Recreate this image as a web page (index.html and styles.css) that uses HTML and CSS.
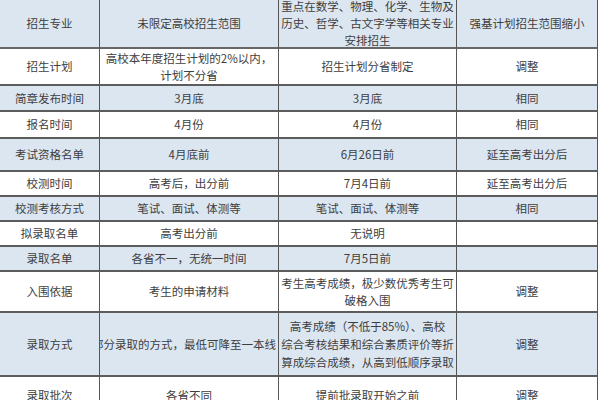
FILE: index.html
```html
<!DOCTYPE html>
<html lang="zh">
<head>
<meta charset="utf-8">
<link rel="stylesheet" href="styles.css">
</head>
<body>
<div class="sheet">
  <div class="row blue h-head">
    <div class="cell">招生专业</div>
    <div class="cell">未限定高校招生范围</div>
    <div class="cell">重点在数学、物理、化学、生物及<br>历史、哲学、古文字学等相关专业<br>安排招生</div>
    <div class="cell">强基计划招生范围缩小</div>
  </div>
  <div class="row h-37">
    <div class="cell">招生计划</div>
    <div class="cell">高校本年度招生计划的2%以内，<br>计划不分省</div>
    <div class="cell">招生计划分省制定</div>
    <div class="cell">调整</div>
  </div>
  <div class="row blue h-26">
    <div class="cell">简章发布时间</div>
    <div class="cell">3月底</div>
    <div class="cell">3月底</div>
    <div class="cell">相同</div>
  </div>
  <div class="row h-27">
    <div class="cell">报名时间</div>
    <div class="cell">4月份</div>
    <div class="cell">4月份</div>
    <div class="cell">相同</div>
  </div>
  <div class="row blue h-33">
    <div class="cell">考试资格名单</div>
    <div class="cell">4月底前</div>
    <div class="cell">6月26日前</div>
    <div class="cell">延至高考出分后</div>
  </div>
  <div class="row h-25">
    <div class="cell">校测时间</div>
    <div class="cell">高考后，出分前</div>
    <div class="cell">7月4日前</div>
    <div class="cell">延至高考出分后</div>
  </div>
  <div class="row blue h-25">
    <div class="cell">校测考核方式</div>
    <div class="cell">笔试、面试、体测等</div>
    <div class="cell">笔试、面试、体测等</div>
    <div class="cell">相同</div>
  </div>
  <div class="row h-25">
    <div class="cell">拟录取名单</div>
    <div class="cell">高考出分前</div>
    <div class="cell">无说明</div>
    <div class="cell"></div>
  </div>
  <div class="row blue h-25">
    <div class="cell">录取名单</div>
    <div class="cell">各省不一，无统一时间</div>
    <div class="cell">7月5日前</div>
    <div class="cell"></div>
  </div>
  <div class="row h-41">
    <div class="cell">入围依据</div>
    <div class="cell">考生的申请材料</div>
    <div class="cell">考生高考成绩，极少数优秀考生可<br>破格入围</div>
    <div class="cell">调整</div>
  </div>
  <div class="row blue h-64">
    <div class="cell">录取方式</div>
    <div class="cell shifted"><span class="line">部分录取的方式，最低可降至一本线</span></div>
    <div class="cell">高考成绩（不低于85%）、高校<br>综合考核结果和综合素质评价等折<br>算成综合成绩，从高到低顺序录取</div>
    <div class="cell">调整</div>
  </div>
  <div class="row h-40">
    <div class="cell">录取批次</div>
    <div class="cell">各省不同</div>
    <div class="cell">提前批录取开始之前</div>
    <div class="cell">调整</div>
  </div>
</div>
</body>
</html>
```

FILE: styles.css
```css
html, body {
  margin: 0;
  padding: 0;
  background: #ffffff;
}

body {
  width: 600px;
  height: 400px;
  overflow: hidden;
  font-family: "Noto Sans CJK SC", "Noto Sans", sans-serif;
  font-size: 11.5px;
  line-height: 17px;
  color: #3e3e3e;
}

.sheet {
  width: 598px;
}

.row {
  display: grid;
  grid-template-columns: 100px 179px 178px 141px;
  background: #ffffff;
}

.row.blue {
  background: #dce6f1;
}

.cell {
  box-sizing: border-box;
  display: flex;
  align-items: center;
  justify-content: center;
  text-align: center;
  padding: 0;
  border-right: 1px solid #555555;
  border-bottom: 2px solid #5c5c5c;
  overflow: hidden;
  white-space: nowrap;
}

.cell.shifted {
  padding-right: 10px;
}

.line {
  white-space: nowrap;
  flex-shrink: 0;
}

.h-head { height: 49px; }
.h-head .cell { border-bottom-color: #666666; }
.h-37 { height: 37px; }
.h-26 { height: 26px; }
.h-27 { height: 27px; }
.h-33 { height: 33px; }
.h-25 { height: 25px; }
.h-41 { height: 41px; }
.h-64 { height: 64px; }
.h-64 .cell { line-height: 18px; }
.h-40 { height: 38px; }
```
